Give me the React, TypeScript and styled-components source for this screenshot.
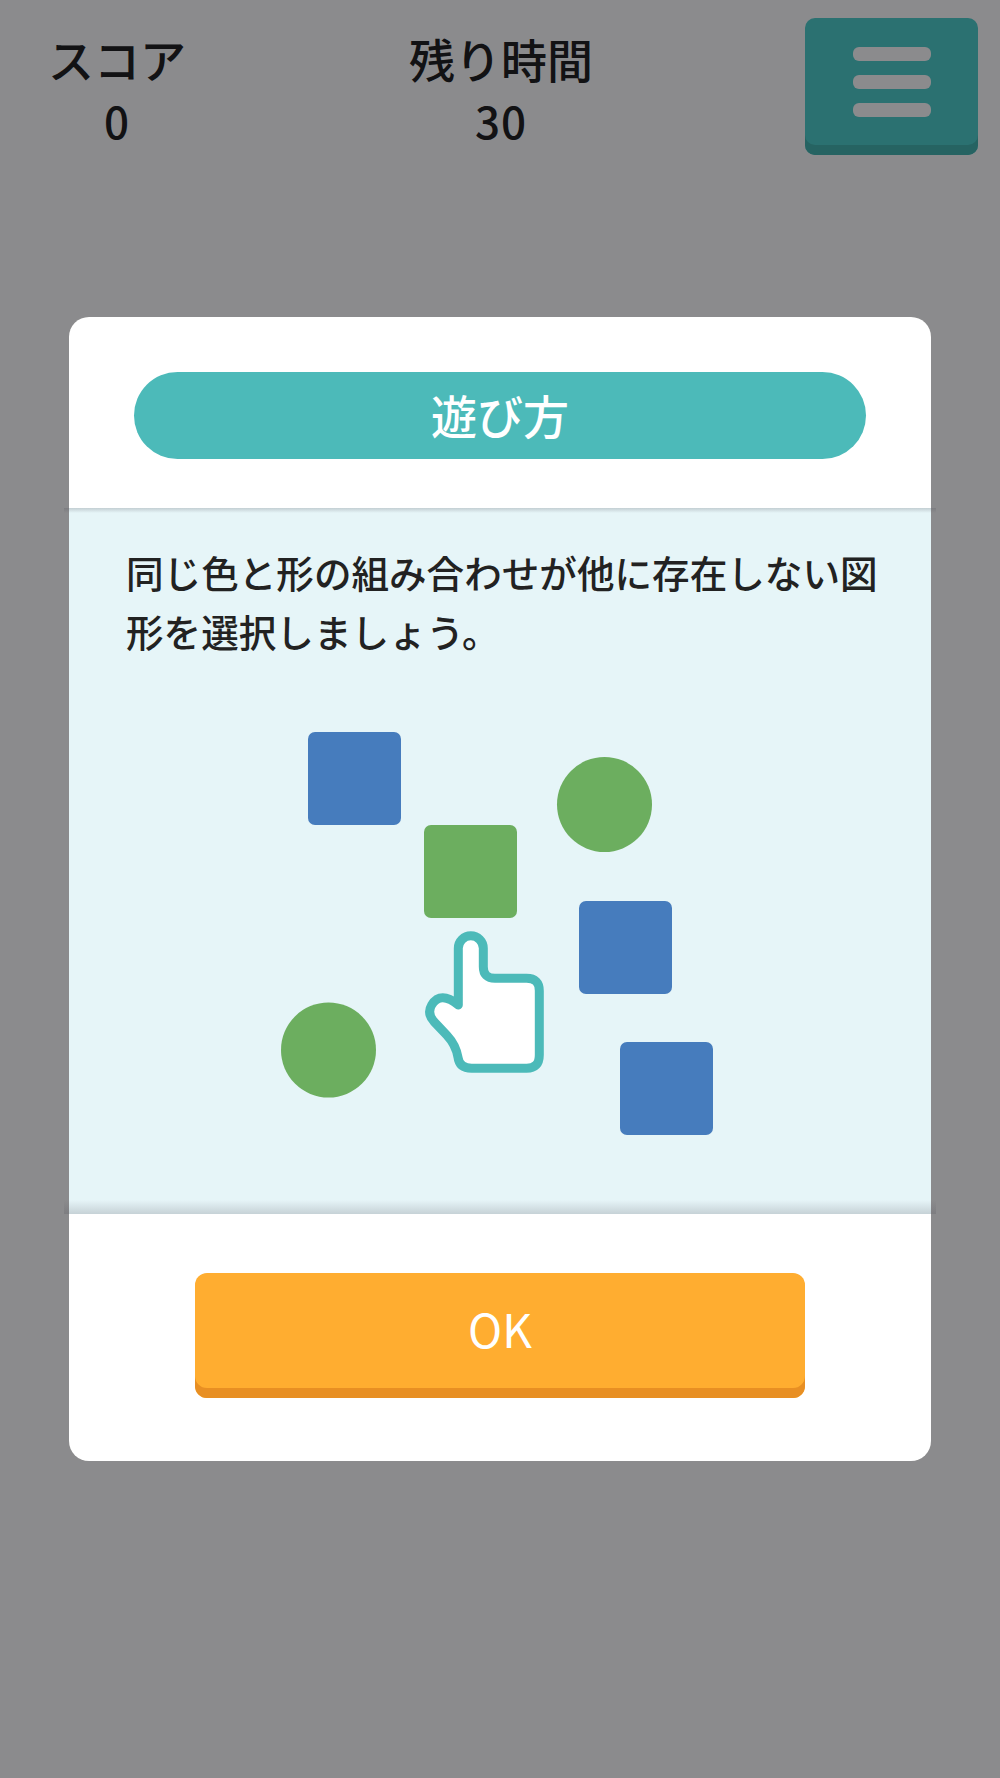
import styled, { createGlobalStyle } from 'styled-components'

const GlobalStyle = createGlobalStyle`
	html, body {
		margin: 0;
		background: #fff;
		font-family: 'Noto Sans CJK JP', 'Noto Sans', sans-serif;
		color: #222;
	}
`

const Page = styled.div`
	position: relative;
	height: 1778px;
	overflow: hidden;
`

const Header = styled.header`
	display: grid;
	grid-template-columns: 234px 534px 1fr;
	padding: 18px 22px 0 0;
`

const Stat = styled.div`
	display: flex;
	flex-direction: column;
	align-items: center;
	padding-top: 10px;
	font-weight: 500;
`

const StatLabel = styled.div`
	font-size: 46px;
	line-height: 60px;
`

const StatValue = styled.div`
	font-size: 44px;
	line-height: 64px;
	letter-spacing: 1px;
`

const MenuButton = styled.button`
	justify-self: end;
	box-sizing: border-box;
	width: 173px;
	height: 137px;
	padding: 29px 0 0;
	border: 0;
	border-radius: 10px;
	background: #50cfcb;
	box-shadow: inset 0 -10px 0 #46b6b0;
	display: flex;
	flex-direction: column;
	align-items: center;
	gap: 14px;
`

const MenuBar = styled.span`
	display: block;
	width: 78px;
	height: 14px;
	border-radius: 6px;
	background: #fff;
`

const Overlay = styled.div`
	position: fixed;
	inset: 0;
	background: rgba(0, 0, 4, 0.455);
	display: flex;
	align-items: center;
	justify-content: center;
`

const Modal = styled.div`
	width: 862px;
	background: #fff;
	border-radius: 20px;
`

const ModalHead = styled.div`
	padding: 55px 65px 49px;
`

const TitlePill = styled.h2`
	margin: 0;
	height: 87px;
	border-radius: 44px;
	background: #4cbab9;
	color: #fff;
	font-size: 46px;
	font-weight: 500;
	line-height: 85px;
	text-align: center;
`

const Panel = styled.div`
	position: relative;
	box-sizing: border-box;
	height: 706px;
	padding: 34px 45px 0 57px;
	background: #e6f5f8;

	&::before,
	&::after {
		content: '';
		position: absolute;
		left: -5px;
		right: -5px;
	}
	&::before {
		top: 0;
		height: 5px;
		background: linear-gradient(rgba(70, 70, 80, 0.22), rgba(70, 70, 80, 0));
	}
	&::after {
		bottom: 0;
		height: 14px;
		background: linear-gradient(rgba(70, 70, 80, 0), rgba(70, 70, 80, 0.2));
	}
`

const Description = styled.p`
	margin: 0;
	font-size: 37.6px;
	font-weight: 500;
	line-height: 59px;
`

const Illustration = styled.svg`
	display: block;
	width: 432px;
	height: 403px;
	margin: 72px 0 0 155px;
`

const ModalFoot = styled.div`
	display: flex;
	justify-content: center;
	padding: 59px 0 63px;
`

const OkButton = styled.button`
	width: 610px;
	height: 125px;
	padding: 0 0 16px;
	border: 0;
	border-radius: 12px;
	background: #ffad30;
	box-shadow: inset 0 -10px 0 #e88f23;
	color: #fff;
	font-family: inherit;
	font-size: 46px;
	font-weight: 400;
`

const App = () => {
	return (
		<Page>
			<GlobalStyle />
			<Header>
				<Stat>
					<StatLabel>スコア</StatLabel>
					<StatValue>0</StatValue>
				</Stat>
				<Stat>
					<StatLabel>残り時間</StatLabel>
					<StatValue>30</StatValue>
				</Stat>
				<MenuButton aria-label="メニュー">
					<MenuBar />
					<MenuBar />
					<MenuBar />
				</MenuButton>
			</Header>

			<Overlay>
				<Modal>
					<ModalHead>
						<TitlePill>遊び方</TitlePill>
					</ModalHead>
					<Panel>
						<Description>
							同じ色と形の組み合わせが他に存在しない図形を選択しましょう。
						</Description>
						<Illustration viewBox="0 0 432 403">
							<rect x="27" y="0" width="93" height="93" rx="7" fill="#467cbd" />
							<rect x="143" y="93" width="93" height="93" rx="7" fill="#6cae5f" />
							<rect x="298" y="169" width="93" height="93" rx="7" fill="#467cbd" />
							<rect x="339" y="310" width="93" height="93" rx="7" fill="#467cbd" />
							<circle cx="323.5" cy="72.5" r="47.5" fill="#6cae5f" />
							<circle cx="47.5" cy="318" r="47.5" fill="#6cae5f" />
							{/* hand traced in 3x coords */}
							<path
								transform="translate(-31 -12) scale(0.3333)"
								d="M625 855 V685 A37.5 37.5 0 0 1 700 685 V740 Q700 775 735 775 H830 Q868 775 868 812 V1005 Q868 1045 830 1045 H665 Q628 1045 624 1012 Q618 975 590 945 L552 905 Q530 880 545 855 Q572 812 625 855 Z"
								fill="#fff"
								stroke="#4cbab9"
								strokeWidth="27"
								strokeLinejoin="round"
							/>
						</Illustration>
					</Panel>
					<ModalFoot>
						<OkButton>OK</OkButton>
					</ModalFoot>
				</Modal>
			</Overlay>
		</Page>
	)
}

export default App
